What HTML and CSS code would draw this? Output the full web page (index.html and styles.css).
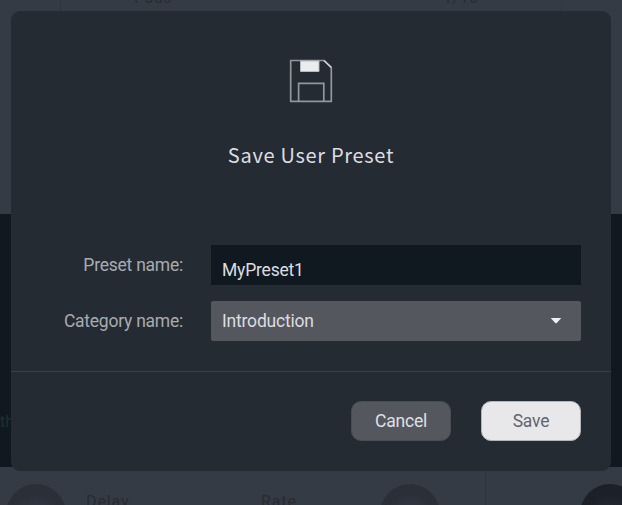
FILE: index.html
```html
<!DOCTYPE html>
<html lang="en">
<head>
<meta charset="utf-8">
<title>Save User Preset</title>
<link rel="stylesheet" href="styles.css">
</head>
<body>
<div class="backdrop" aria-hidden="true">
  <section class="strip strip-top"><div></div><div><span class="pads">Pads</span><span class="rate">1/16</span></div><div></div></section>
  <section class="stage"><span>gth</span></section>
  <section class="strip strip-bottom">
    <i class="knob knob-a"></i><span class="delay">Delay</span><span class="speed">Rate</span><i class="knob knob-b"></i><i class="divider"></i><i class="knob knob-c"></i>
  </section>
</div>
<form class="dialog" role="dialog" aria-labelledby="title">
  <header class="head">
    <svg class="disk" width="44" height="44" viewBox="0 0 44 44" fill="none" stroke="#92969e" stroke-width="1.7">
      <path d="M1.7 1.5H35L42.3 8.5V42.3H1.7Z"/>
      <path d="M9.6 42V24.3H34.8V42"/>
      <path d="M35 1.5L42.3 8.5" stroke="#d0d2d6"/>
      <path d="M11.5 2H30V12.5H11.5Z" fill="#ebecee" stroke="#b7b9be" stroke-width="1"/>
    </svg>
    <h1 id="title">Save User Preset</h1>
  </header>
  <div class="fields">
    <label for="name">Preset name:</label>
    <input id="name" class="control name" value="MyPreset1">
    <span class="label">Category name:</span>
    <div class="control select"><span>Introduction</span><svg width="12" height="6" viewBox="0 0 12 6"><path d="M0.7 0H11.3L7 4.8Q6 5.8 5 4.8Z" fill="#f0f0f2"/></svg></div>
  </div>
  <footer class="actions">
    <button type="button" class="cancel">Cancel</button>
    <button type="button" class="save">Save</button>
  </footer>
</form>
</body>
</html>
```
FILE: styles.css
```css
* { box-sizing: border-box; }
body {
  margin: 0;
  width: 622px;
  height: 505px;
  position: relative;
  overflow: hidden;
  font-family: Roboto, "Liberation Sans", sans-serif;
  font-size: 18px;
  background: #343b44;
}
.backdrop {
  height: 505px;
  display: grid;
  grid-template-columns: 622px;
  grid-template-rows: 214px 253px 38px;
  color: #272c35;
  font-size: 16px;
  overflow: hidden;
}
.strip { background: #353b44; }
.strip-top { display: grid; grid-template-columns: 60px 501px 1fr; }
.strip-top > div + div { border-left: 1px solid #30363f; }
.strip-top > div:nth-child(2) {
  display: flex;
  padding-left: 73px;
  margin-top: -12px;
  line-height: 19px;
  letter-spacing: .5px;
}
.pads { width: 309px; }
.stage {
  background: #111920;
  padding-top: 198px;
  line-height: 20px;
  color: #242d36;
}
.stage span { margin-left: -9px; }
.strip-bottom {
  display: flex;
  align-items: flex-start;
  height: 38px;
  overflow: hidden;
  letter-spacing: .9px;
}
.strip-bottom > * { flex: none; }
.strip-bottom span { margin-top: 25px; line-height: 19px; }
.knob {
  width: 60px;
  height: 60px;
  margin-top: 17px;
  border-radius: 50%;
  background: radial-gradient(circle at 50% 60%, #30363f 0 16px, #2a2f38 26px);
}
.knob-a { margin-left: 6px; }
.delay { width: 175px; margin-left: 20px; }
.speed { width: 119px; }
.divider { width: 1px; height: 38px; margin-left: 45px; background: #2f353e; }
.knob-c { margin-left: 94px; background: radial-gradient(circle at 50% 60%, #20272f 0 16px, #1c2129 26px); }
.dialog {
  position: absolute;
  top: 11px;
  left: 11px;
  width: 600px;
  height: 460px;
  border-radius: 9px;
  background: #252b33;
  display: grid;
  grid-template-rows: 234px 126px 100px;
}
.head {
  display: flex;
  flex-direction: column;
  align-items: center;
  padding-top: 48px;
}
.disk { flex: none; }
h1 {
  margin: 37px 0 0;
  font: 400 20px/30px "Noto Sans CJK JP", sans-serif;
  letter-spacing: .7px;
  color: #dcdee1;
}
.fields {
  display: grid;
  grid-template-columns: 172px 370px;
  grid-template-rows: 40px 40px;
  gap: 16px 28px;
  align-items: center;
}
label, .label {
  text-align: right;
  color: #a8abb1;
  font-size: 17.5px;
  letter-spacing: -.24px;
}
.control {
  width: 370px;
  height: 40px;
  border: 0;
  padding: 0 11px;
  font: 17.5px Roboto, sans-serif;
  letter-spacing: -.2px;
  color: #dcdde0;
}
.name {
  padding-top: 10px;
  background: #111920;
}
.select {
  display: flex;
  align-items: center;
  justify-content: space-between;
  padding-right: 19px;
  border-radius: 2px;
  background: #55575f;
}
.actions {
  display: flex;
  justify-content: flex-end;
  gap: 30px;
  padding: 29px 30px 0;
  border-top: 1px solid #3c3d45;
}
button {
  width: 100px;
  height: 40px;
  border: 1px solid #494c54;
  border-radius: 10px;
  font: 17.5px Roboto, sans-serif;
  letter-spacing: -.2px;
}
.cancel { background: #55575f; color: #dfe0e3; }
.save { background: #e8e8ea; color: #62656d; border-color: #b4b5b9; }
```
